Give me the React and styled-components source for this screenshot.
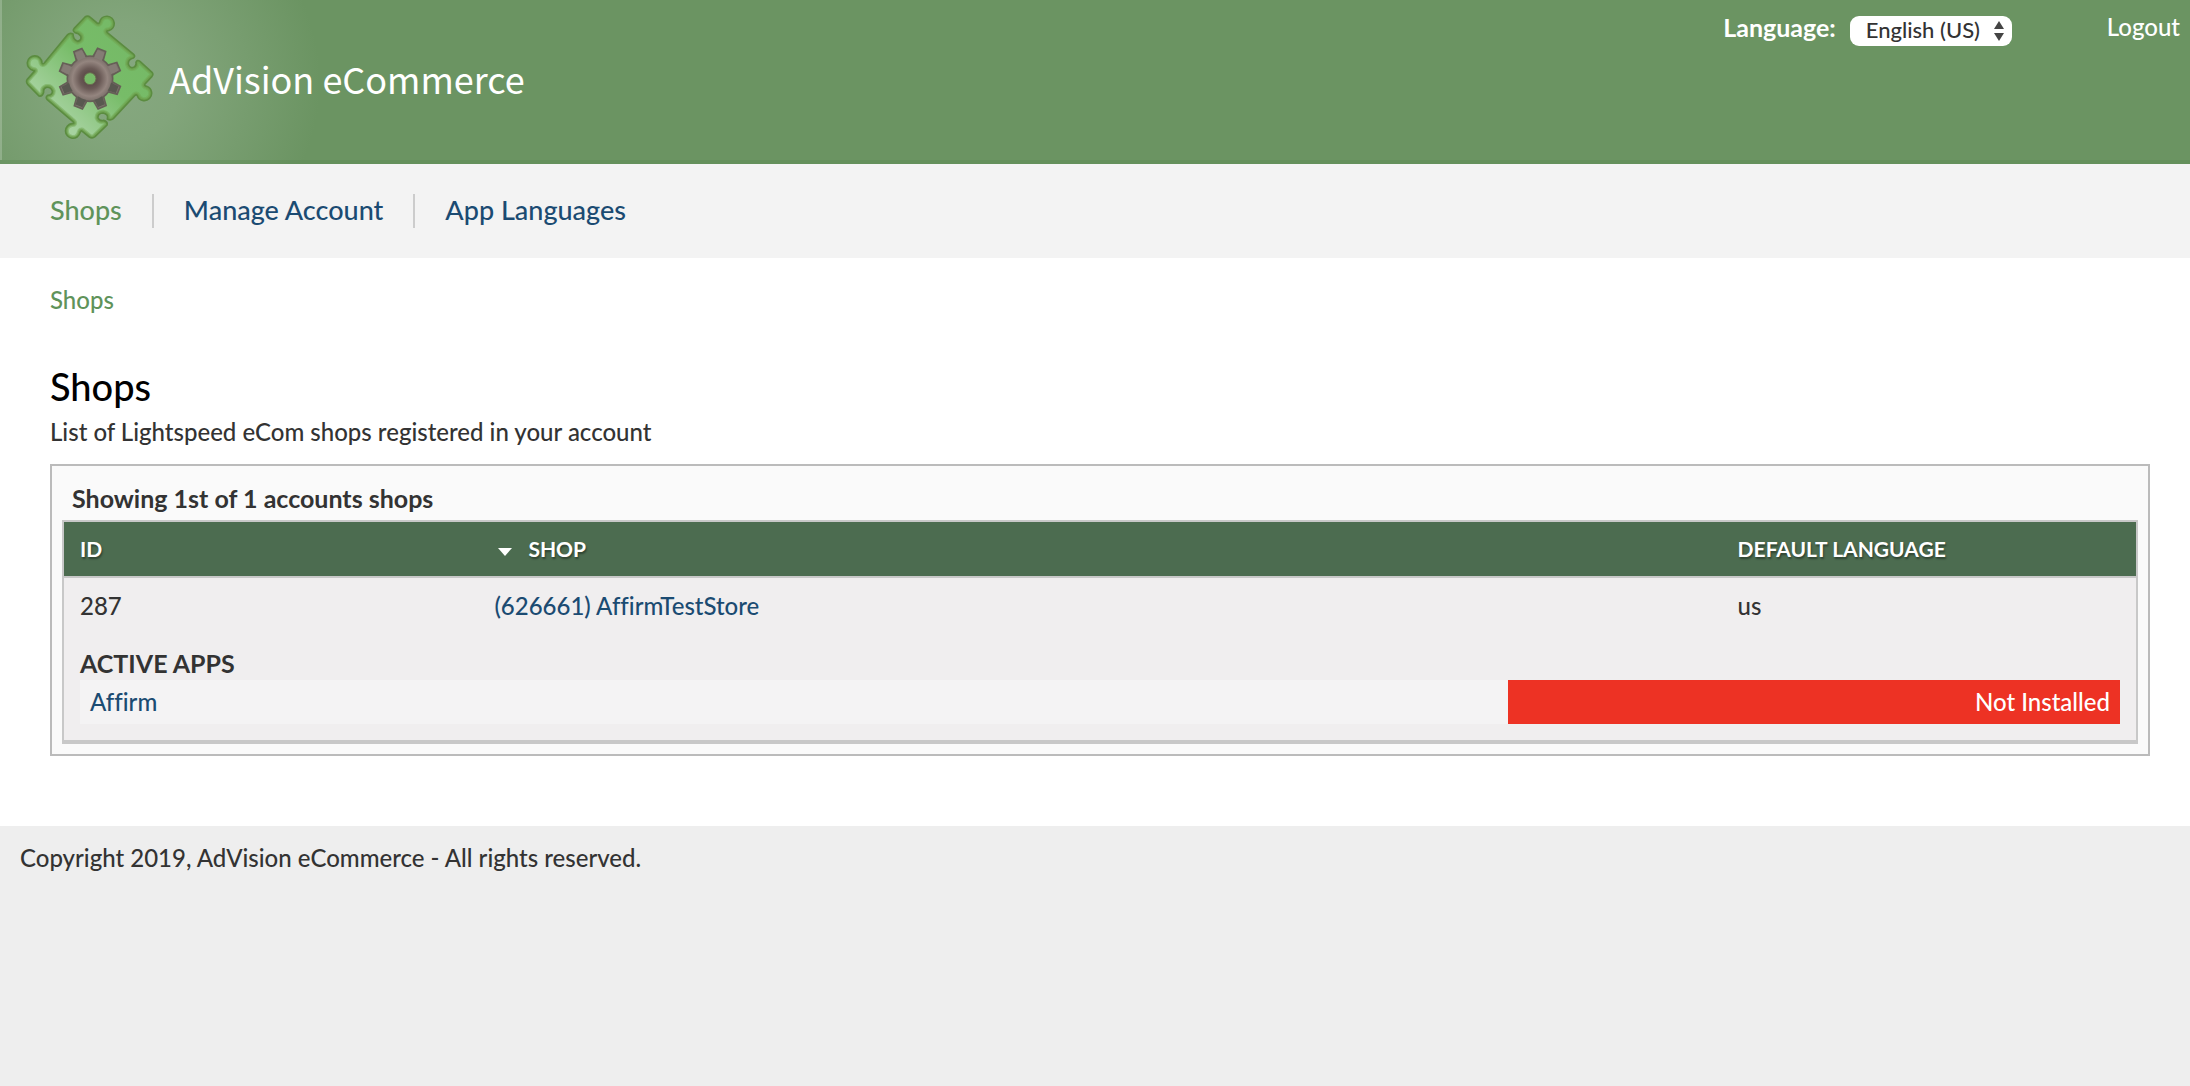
import React, { useState } from 'react'
import styled, { createGlobalStyle, css } from 'styled-components'

const Font = '"Trebuchet MS", Lato, "Open Sans", sans-serif'
const FontLogo = '"Source Sans Pro", "Noto Sans CJK SC", "Noto Sans", sans-serif'
const Green = '#6b9462'
const GreenDark = '#4c6c50'
const GreenText = '#5f935a'
const Blue = '#1b4b72'
const Text = '#333'
const Line = '#c8c8c8'

const GlobalStyle = createGlobalStyle`
  * {
    box-sizing: border-box;
  }
  body {
    margin: 0;
    background-color: #eee;
    color: ${Text};
    font-family: ${Font};
    font-size: 24px;
    font-weight: 500;
    font-variant-ligatures: none;
    line-height: 32px;
  }
  a {
    color: ${Blue};
    text-decoration: none;
  }
`

const Header = styled.header`
  display: flex;
  justify-content: space-between;
  align-items: flex-start;
  height: 164px;
  border-bottom: 4px solid rgba(80, 130, 70, 0.25);
  box-shadow: inset 2px 0 0 rgba(255, 255, 255, 0.2);
  background: radial-gradient(circle at 120px 82px, #86a880 0, #82a57b 60px, ${Green} 200px) border-box;
`

const Brand = styled.a`
  display: flex;
  align-items: center;
  gap: 14px;
  height: 156px;
  padding-left: 23px;
  color: #fff;
  font-family: ${FontLogo};
  font-size: 36px;
  font-weight: normal;
  line-height: 48px;
`

const LogoSvg = styled.svg`
  width: 132px;
  height: 128px;
`

const Account = styled.div`
  display: flex;
  align-items: flex-start;
  padding: 11px 10px 0 0;
`

const LanguageLabel = styled.label`
  color: #fff;
  font-size: 25px;
  font-weight: bold;
`

const SelectBox = styled.span`
  position: relative;
  display: flex;
  margin: 5px 95px 0 14px;
  > svg {
    position: absolute;
    top: 5px;
    right: 8px;
    pointer-events: none;
  }
`

const Select = styled.select`
  appearance: none;
  width: 162px;
  height: 30px;
  padding: 0 0 2px 16px;
  border: 0;
  border-radius: 9px;
  background-color: #fff;
  color: ${Text};
  font-family: ${Font};
  font-size: 22px;
  font-weight: 500;
  line-height: 28px;
`

const Logout = styled.a`
  color: #fff;
`

const Nav = styled.nav`
  padding: 30px 20px;
  background-color: #f3f3f3;
  font-size: 27px;
  line-height: 32px;
`

const NavList = styled.ul`
  display: flex;
  margin: 0;
  padding: 0;
  list-style: none;
`

const NavItem = styled.li`
  height: 34px;
  padding: 0 30px;
  & + & {
    border-left: 2px solid #ccc;
  }
`

const NavLink = styled.a`
  ${({ $active }) => $active && css`
    color: ${GreenText};
  `}
`

const Main = styled.main`
  padding: 26px 40px 70px 50px;
  background-color: #fff;
`

const Crumb = styled.a`
  display: block;
  color: ${GreenText};
`

const Title = styled.h1`
  margin: 46px 0 6px;
  color: #000;
  font-size: 38px;
  font-weight: 500;
  line-height: 48px;
`

const Lead = styled.p`
  margin: 0 0 16px;
`

const Panel = styled.section`
  padding: 10px;
  border: 2px solid #bbb;
  background-color: #fafafa;
`

const PanelTitle = styled.div`
  padding-left: 10px;
  font-size: 25px;
  font-weight: bold;
  line-height: 44px;
`

const TableFrame = styled.div`
  border: 2px solid ${Line};
  border-bottom-width: 4px;
`

const Table = styled.table`
  width: 100%;
  border-spacing: 0;
  table-layout: fixed;
  background-color: #f0eeef;
`

const HeadCell = styled.th`
  width: ${({ $width }) => $width};
  padding: 11px 16px;
  background-color: ${GreenDark};
  color: #fff;
  font-size: 21px;
  text-align: left;
  text-transform: uppercase;
  text-shadow: 1px 2px 2px rgba(0, 0, 0, 0.4);
  > svg {
    margin: 0 16px 1px 4px;
  }
`

const Cell = styled.td`
  padding: 12px 16px;
`

const FirstRow = styled.tr`
  > td {
    border-top: 2px solid ${Line};
  }
`

const AppsCell = styled.td`
  padding: 12px 16px 16px;
`

const AppsTitle = styled.h4`
  margin: 0;
  font-size: 25px;
  line-height: 34px;
  text-transform: uppercase;
`

const AppsTable = styled.table`
  width: 100%;
  border-spacing: 0;
  table-layout: fixed;
  background-color: #f4f3f4;
`

const AppName = styled.td`
  width: 70%;
  padding: 6px 10px;
`

const AppStatus = styled.td`
  padding: 6px 10px;
  background-color: ${({ $installed }) => ($installed ? Green : '#ed3224')};
  color: #fff;
  text-align: right;
`

const Footer = styled.footer`
  padding: 16px 20px;
`

const TEETH = [22, 67, 112, 157, 202, 247, 292, 337]

const PIECE = `M255 51 Q263 45 271 52 L291 69 Q297 73 299 66
  A22 22 0 1 1 326 92 Q317 92 322 98 L401 163 Q407 169 400 174
  Q384 178 385 192 Q389 206 401 202 Q410 198 408 187 Q411 178 420 184
  L456 217 Q461 223 456 229 L435 252 Q432 258 440 259
  A22 22 0 1 1 412 287 Q409 282 404 287 L340 356 Q331 363 322 357
  Q326 342 309 339 Q293 340 294 353 Q298 364 311 361 Q324 365 321 375
  L285 410 Q277 417 268 411 L247 394 Q243 390 240 398
  A22 22 0 1 1 216 371 Q225 372 219 365 L141 298 Q136 291 143 286
  Q158 285 157 273 Q152 260 139 262 Q129 266 131 276 Q128 290 117 288
  L83 253 Q77 245 82 238 L103 214 Q106 211 99 211
  A22 22 0 1 1 126 188 Q128 194 133 189 L203 104 Q210 97 219 102
  Q219 119 233 124 Q246 121 242 108 Q237 100 225 98 Q217 92 222 86 Z`

function Logo() {
  return (
    <LogoSvg viewBox="69 42 396 384" aria-hidden="true">
      <defs>
        <linearGradient id="piece" x1="0" y1="1" x2="1" y2="0">
          <stop offset="0.22" stopColor="#a6d29f" />
          <stop offset="0.55" stopColor="#77bc68" />
          <stop offset="1" stopColor="#74b866" />
        </linearGradient>
        <radialGradient id="gear" gradientUnits="userSpaceOnUse" cx="270" cy="236" r="97">
          <stop offset="0.18" stopColor="#5c4c49" />
          <stop offset="0.32" stopColor="#6a5a56" />
          <stop offset="0.54" stopColor="#94857f" />
          <stop offset="0.68" stopColor="#7d716b" />
          <stop offset="1" stopColor="#7d766e" />
        </radialGradient>
        <clipPath id="pieceClip">
          <path d={PIECE} />
        </clipPath>
      </defs>
      <path d={PIECE} fill="url(#piece)" />
      <g clipPath="url(#pieceClip)" fill="none" strokeLinejoin="round">
        <path d={PIECE} stroke="#6fa552" strokeWidth="20" opacity="0.5" />
        <path d={PIECE} stroke="#6c9f4c" strokeWidth="13" opacity="0.7" />
      </g>
      <path d={PIECE} fill="none" stroke="#5b8c40" strokeWidth="5" />
      <g fill="url(#gear)" stroke="#665f57" strokeWidth="5">
        {TEETH.map((angle) => (
          <path key={angle} d="M253 176 L257 143 H283 L287 176 Z" transform={`rotate(${angle} 270 236)`} />
        ))}
        <circle cx="270" cy="236" r="68" />
      </g>
      {TEETH.map((angle) => (
        <path
          key={angle}
          d="M257 176 L259 148 H281 L283 176 Z"
          fill={angle > 90 && angle < 270 ? '#595850' : '#857c75'}
          transform={`rotate(${angle} 270 236)`}
        />
      ))}
      <circle cx="270" cy="236" r="64" fill="url(#gear)" />
      <circle cx="270" cy="236" r="18" fill="#77b968" stroke="#6a6a4f" strokeWidth="3" />
    </LogoSvg>
  )
}

const menu = ['Shops', 'Manage Account', 'App Languages']

const shops = [
  { id: 287, name: '(626661) AffirmTestStore', language: 'us', apps: [{ name: 'Affirm', installed: false }] },
]

export default function App() {
  const [language, setLanguage] = useState('us')

  return (
    <>
      <GlobalStyle />
      <Header>
        <Brand href="#">
          <Logo />
          AdVision eCommerce
        </Brand>
        <Account>
          <LanguageLabel htmlFor="language">Language:</LanguageLabel>
          <SelectBox>
            <Select id="language" value={language} onChange={(e) => setLanguage(e.target.value)}>
              <option value="us">English (US)</option>
            </Select>
            <svg width="10" height="20" viewBox="0 0 10 20" fill="#444">
              <path d="M5 0 L10 8 H0 Z M0 12 H10 L5 20 Z" />
            </svg>
          </SelectBox>
          <Logout href="#">Logout</Logout>
        </Account>
      </Header>
      <Nav>
        <NavList>
          {menu.map((item, i) => (
            <NavItem key={item}>
              <NavLink href="#" $active={i === 0}>{item}</NavLink>
            </NavItem>
          ))}
        </NavList>
      </Nav>
      <Main>
        <Crumb href="#">Shops</Crumb>
        <Title>Shops</Title>
        <Lead>List of Lightspeed eCom shops registered in your account</Lead>
        <Panel>
          <PanelTitle>Showing 1st of 1 accounts shops</PanelTitle>
          <TableFrame>
            <Table>
              <thead>
                <tr>
                  <HeadCell $width="20%">ID</HeadCell>
                  <HeadCell $width="60%">
                    <svg width="14" height="8" viewBox="0 0 14 8" fill="#fff">
                      <path d="M0 0 H14 L7 8 Z" />
                    </svg>
                    Shop
                  </HeadCell>
                  <HeadCell $width="20%">Default Language</HeadCell>
                </tr>
              </thead>
              {shops.map((shop) => (
                <tbody key={shop.id}>
                  <FirstRow>
                    <Cell>{shop.id}</Cell>
                    <Cell><a href="#">{shop.name}</a></Cell>
                    <Cell>{shop.language}</Cell>
                  </FirstRow>
                  <tr>
                    <AppsCell colSpan={3}>
                      <AppsTitle>Active Apps</AppsTitle>
                      <AppsTable>
                        <tbody>
                          {shop.apps.map((app) => (
                            <tr key={app.name}>
                              <AppName><a href="#">{app.name}</a></AppName>
                              <AppStatus $installed={app.installed}>
                                {app.installed ? 'Installed' : 'Not Installed'}
                              </AppStatus>
                            </tr>
                          ))}
                        </tbody>
                      </AppsTable>
                    </AppsCell>
                  </tr>
                </tbody>
              ))}
            </Table>
          </TableFrame>
        </Panel>
      </Main>
      <Footer>Copyright 2019, AdVision eCommerce - All rights reserved.</Footer>
    </>
  )
}
